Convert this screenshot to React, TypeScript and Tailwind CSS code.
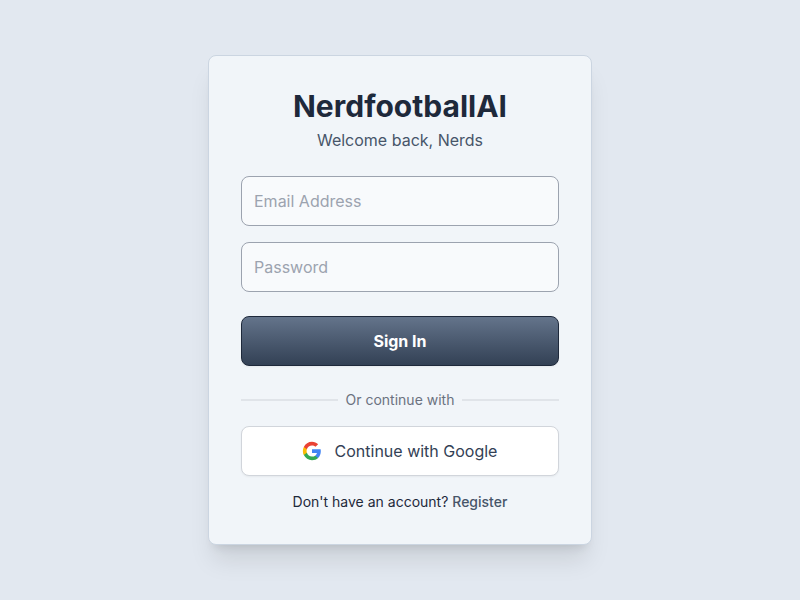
function GoogleIcon() {
  return (
    <svg className="mr-[13px] -ml-px h-5 w-5" viewBox="0 0 24 24">
      <path fill="#4285F4" d="M22.56 12.25c0-.78-.07-1.53-.2-2.25H12v4.26h5.92c-.26 1.37-1.04 2.53-2.21 3.31v2.77h3.57c2.08-1.92 3.28-4.74 3.28-8.09z" />
      <path fill="#34A853" d="M12 23c2.97 0 5.46-.98 7.28-2.66l-3.57-2.77c-.98.66-2.23 1.06-3.71 1.06-2.86 0-5.29-1.93-6.16-4.53H2.18v2.84C3.99 20.53 7.7 23 12 23z" />
      <path fill="#FBBC05" d="M5.84 14.09c-.22-.66-.35-1.36-.35-2.09s.13-1.43.35-2.09V7.07H2.18C1.43 8.55 1 10.22 1 12s.43 3.45 1.18 4.93l2.85-2.22.81-.62z" />
      <path fill="#EA4335" d="M12 5.38c1.62 0 3.06.56 4.21 1.64l3.15-3.15C17.45 2.09 14.97 1 12 1 7.7 1 3.99 3.47 2.18 7.07l3.66 2.84c.87-2.6 3.3-4.53 6.16-4.53z" />
    </svg>
  );
}

const field =
  "h-[50px] w-full rounded-lg border border-[#9ca3af] bg-[#f8fafc] px-3 text-base text-[#1e293b] placeholder:text-[#9ca3af]";

export default function App() {
  return (
    <div className="flex min-h-screen items-center justify-center bg-[#e2e8f0] font-['Inter',sans-serif] text-[#1e293b]">
      <main className="h-[490px] w-96 rounded-lg border border-[#cbd5e1] bg-[#f1f5f9] p-8 shadow-xl">
        <header className="mb-6 text-center">
          <h1 className="text-3xl leading-9 font-bold">NerdfootballAI</h1>
          <p className="mt-1 text-base leading-6 text-[#475569]">Welcome back, Nerds</p>
        </header>
        <form className="flex flex-col gap-4">
          <input className={field} type="email" placeholder="Email Address" />
          <input className={field} type="password" placeholder="Password" />
          <button type="button" className="mt-2 h-[50px] w-full rounded-lg border border-[#1e293b] bg-linear-to-b from-[#64748b] to-[#334155] text-base font-bold text-white shadow-xs">
            Sign In
          </button>
        </form>
        <div className="mt-6 mb-4 flex items-center">
          <div className="h-0.5 flex-1 bg-[#e0e4e9]" />
          <span className="px-2 text-sm leading-5 text-[#6b7280]">Or continue with</span>
          <div className="h-0.5 flex-1 bg-[#e0e4e9]" />
        </div>
        <button type="button" className="flex h-[50px] w-full items-center justify-center rounded-lg border border-[#d1d5db] bg-white text-base text-[#334155] shadow-xs">
          <GoogleIcon />
          Continue with Google
        </button>
        <p className="mt-4 text-center text-sm leading-5">
          Don't have an account? <a className="font-medium text-[#475569]">Register</a>
        </p>
      </main>
    </div>
  );
}
